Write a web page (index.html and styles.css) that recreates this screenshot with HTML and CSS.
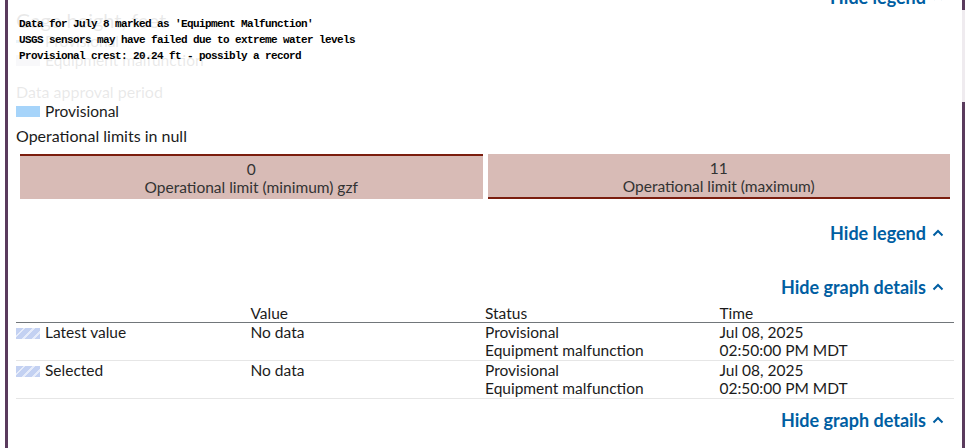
FILE: index.html
```html
<!DOCTYPE html>
<html lang="en">

<head>
    <meta charset="UTF-8" />
    <meta name="viewport" content="width=device-width, initial-scale=1.0" />
    <title>Gage height</title>
    <link rel="stylesheet" href="styles.css">
</head>

<body>
    <div class="frame">
        <div class="toggle toggle-top">
            <a href="#">Hide legend <svg class="chev" viewBox="0 0 12 8" width="12" height="8"><path d="M1.5 6.5 L6 2 L10.5 6.5" /></svg></a>
        </div>

        <!-- legend -->
        <div class="legend">
            <h2 class="legend-title">Gage height, feet</h2>
            <div class="legend-item"><span class="swatch swatch-line"></span>Provisional</div>
            <div class="legend-item"><span class="swatch swatch-faint"></span>Equipment malfunction</div>

            <h3 class="legend-head">Data approval period</h3>
            <div class="legend-item"><span class="swatch swatch-prov"></span>Provisional</div>

            <h3 class="legend-head dark">Operational limits in null</h3>
            <div class="limits">
                <div class="limit limit-min">
                    <div>0</div>
                    <div>Operational limit (minimum) gzf</div>
                </div>
                <div class="limit limit-max">
                    <div>11</div>
                    <div>Operational limit (maximum)</div>
                </div>
            </div>
        </div>

        <div class="toggle">
            <a href="#">Hide legend <svg class="chev" viewBox="0 0 12 8" width="12" height="8"><path d="M1.5 6.5 L6 2 L10.5 6.5" /></svg></a>
        </div>

        <div class="toggle toggle-details">
            <a href="#">Hide graph details <svg class="chev" viewBox="0 0 12 8" width="12" height="8"><path d="M1.5 6.5 L6 2 L10.5 6.5" /></svg></a>
        </div>

        <table class="details">
            <tr>
                <th></th>
                <th>Value</th>
                <th>Status</th>
                <th>Time</th>
            </tr>
            <tr>
                <td><span class="swatch swatch-hatch"></span>Latest value</td>
                <td>No data</td>
                <td>Provisional<br>Equipment malfunction</td>
                <td>Jul 08, 2025<br>02:50:00 PM MDT</td>
            </tr>
            <tr>
                <td><span class="swatch swatch-hatch"></span>Selected</td>
                <td>No data</td>
                <td>Provisional<br>Equipment malfunction</td>
                <td>Jul 08, 2025<br>02:50:00 PM MDT</td>
            </tr>
        </table>

        <div class="toggle toggle-bottom">
            <a href="#">Hide graph details <svg class="chev" viewBox="0 0 12 8" width="12" height="8"><path d="M1.5 6.5 L6 2 L10.5 6.5" /></svg></a>
        </div>

        <!-- annotation box over the legend -->
        <div class="note">
            <p>Data for July 8 marked as 'Equipment Malfunction'</p>
            <p>USGS sensors may have failed due to extreme water levels</p>
            <p>Provisional crest: 20.24 ft - possibly a record</p>
        </div>
    </div>
</body>

</html>
```

FILE: styles.css
```css
* {
    margin: 0;
    padding: 0;
    box-sizing: border-box;
}

body {
    font-family: Lato, "Noto Sans", sans-serif;
    font-size: 15.5px;
    line-height: 18px;
    color: #1b1b1b;
    background: #fff;
    overflow: hidden;
}

.frame {
    display: flow-root;
    position: relative;
    width: 960px;
    height: 448px;
    margin-left: 5px;
    border-left: 3px solid #5a3b5d;
    border-right: 3px solid #5a3b5d;
    padding: 0 8px;
}

/* toggles */
.toggle {
    display: flex;
    justify-content: flex-end;
    padding-right: 10px;
    margin-top: 25px;
}

.toggle a {
    color: #005ea2;
    font-weight: bold;
    font-size: 18px;
    text-decoration: none;
    display: flex;
    align-items: center;
    gap: 6px;
}

.chev path {
    fill: none;
    stroke: #005ea2;
    stroke-width: 2;
}

.toggle-top {
    margin-top: -12px;
}

.toggle-details {
    margin-top: 36px;
}

.toggle-bottom {
    margin-top: 12px;
}

/* legend */
.legend-title {
    font-size: 20px;
    font-weight: normal;
    line-height: 22px;
    margin-top: 3px;
}

.legend-item {
    display: flex;
    align-items: center;
    height: 18px;
    margin-top: 1px;
}

.swatch {
    display: inline-block;
    width: 24px;
    height: 11px;
    margin-right: 5px;
}

.swatch-line {
    height: 3px;
    background: #1f77b4;
}

.swatch-faint {
    background: #b9b9c9;
}

.swatch-prov {
    background: #a6d4fa;
}

.swatch-hatch {
    background: repeating-linear-gradient(135deg, #c3d1f2 0 5px, #e6ecfa 5px 7px);
    vertical-align: -1px;
}

.legend-head {
    font-size: 16px;
    font-weight: normal;
    line-height: 18px;
    margin-top: 14px;
    margin-bottom: 1px;
}

.legend-head.dark {
    margin-top: 7px;
}

.limits {
    display: flex;
    gap: 5px;
    padding: 0 4px;
    margin-top: 9px;
}

.limit {
    flex: 1;
    background: #d8bbb6;
    text-align: center;
    color: #333;
    font-size: 15.5px;
    height: 45px;
    padding-top: 4px;
}

.limit-min {
    border-top: 2px solid #7b1d0e;
}

.limit-max {
    border-bottom: 2px solid #7b1d0e;
    padding-top: 5px;
}

/* details table */
.details {
    width: 100%;
    table-layout: fixed;
    border-collapse: collapse;
    margin-top: 9px;
}

.details th {
    font-weight: normal;
    text-align: left;
    border-bottom: 1px solid #71767a;
    padding: 0;
    height: 17px;
    line-height: 17px;
}

.details td {
    vertical-align: top;
    padding: 0 0 1px;
    border-bottom: 1px solid #e6e6e6;
}

/* annotation */
.note {
    position: absolute;
    left: 0;
    top: 10px;
    width: 957px;
    height: 92px;
    background: rgba(255, 255, 255, 0.9);
    padding: 6px 0 0 11px;
    font-family: "Liberation Mono", monospace;
    font-weight: bold;
    font-size: 11px;
    letter-spacing: -0.6px;
    line-height: 16px;
    color: #000;
}
```
